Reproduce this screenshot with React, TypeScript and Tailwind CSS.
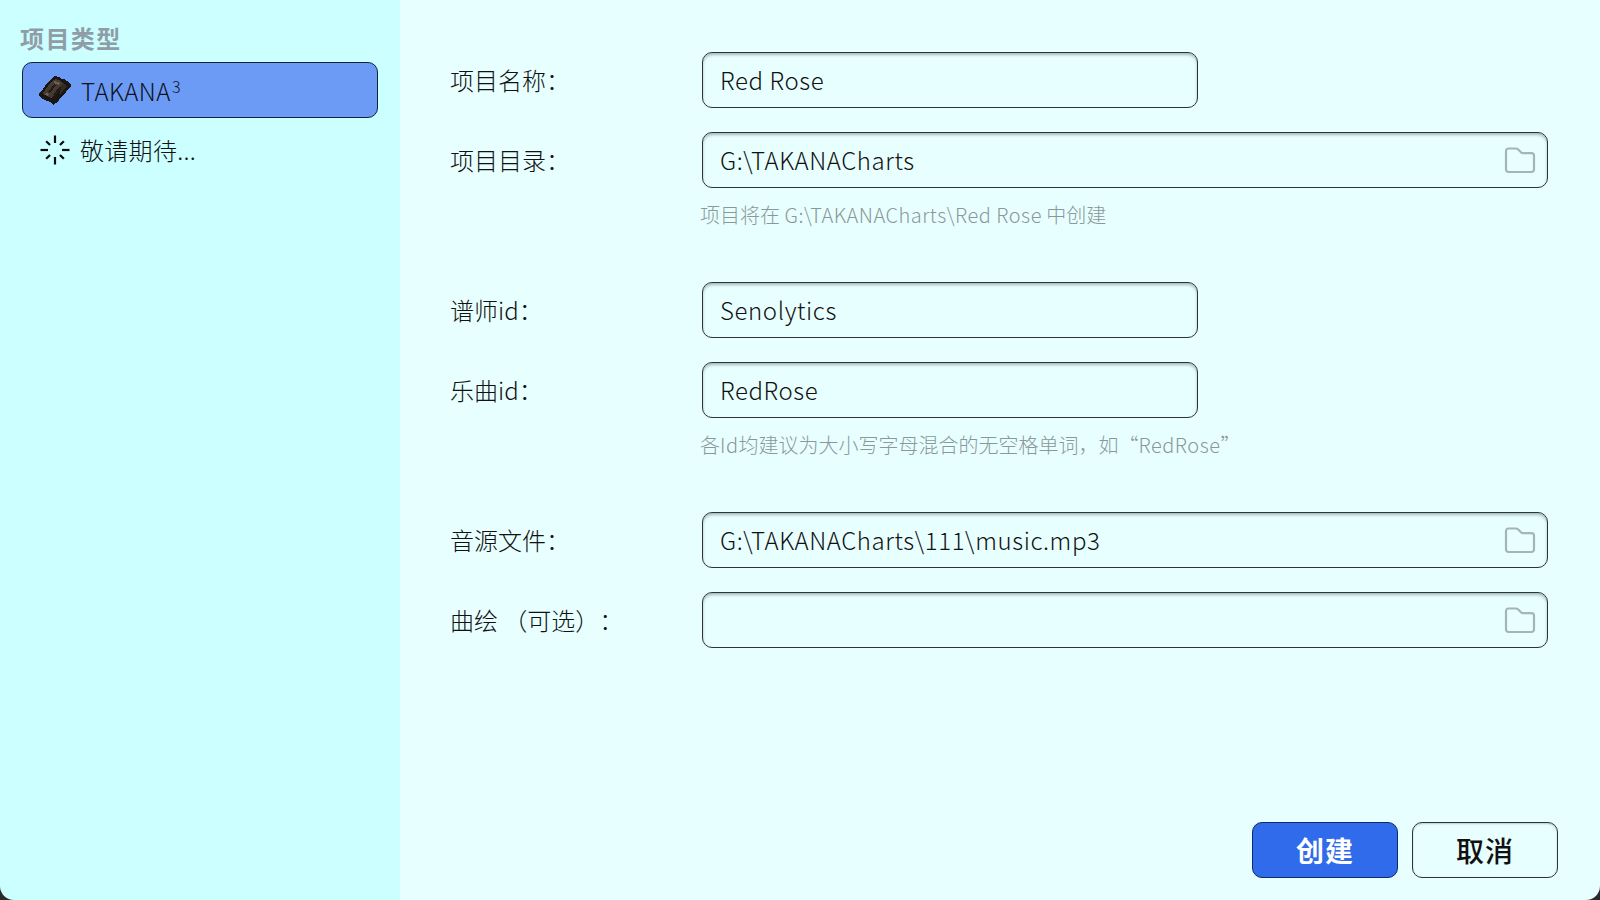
const FONT = "font-['Noto_Sans_CJK_SC','Noto_Sans',sans-serif]"

function FolderIcon() {
  return (
    <svg width="32" height="28" viewBox="0 0 32 28" fill="none" className="shrink-0">
      <path
        d="M2 5a2.5 2.5 0 0 1 2.5-2.5h7.5c1 0 1.6.4 2.2 1l3 3c.5.5 1 .7 1.8.7h8.5A2.5 2.5 0 0 1 30 9.7v13.8a2.5 2.5 0 0 1-2.5 2.5h-23A2.5 2.5 0 0 1 2 23.5z"
        stroke="#a3b5b7"
        strokeWidth="2.2"
      />
    </svg>
  )
}

function NoteIcon() {
  return (
    <svg width="32" height="30" viewBox="0 0 32 30" shapeRendering="crispEdges" className="shrink-0">
      <path d="M0 19l4-5 4-6 5-5 3-2 4 1 2 2 3 0 3 2 4 3v3l-2 1-3 4-4 4-3 4-3 3-3 2-3-3-3-1-4-2-3-2-2-2z" fill="#191613" />
      <path d="M4 18l5-7 5-6 3-1 5 2 2 3-5 6-4 5-3 3-4-2-4-2z" fill="#453a30" />
      <path d="M9 17l6-8 2 1-6 8zM14 20l6-8 2 1-6 8z" fill="#241e19" />
      <path d="M15 6l6 2-1 2-5-2zM7 18l3 1-1 2-3-1z" fill="#6f6151" />
      <path d="M24 8l4 3-7 9-1-1z" fill="#332a23" />
    </svg>
  )
}

function SpinnerIcon() {
  const spokes = [0, 45, 90, 135, 180, 225, 270, 315]
  return (
    <svg width="30" height="30" viewBox="0 0 30 30" className="shrink-0">
      {spokes.map((a) => (
        <line
          key={a}
          x1="15"
          y1={a % 90 === 0 ? 0.5 : 2.5}
          x2="15"
          y2="8"
          stroke="#0b0b0b"
          strokeWidth="2.2"
          transform={`rotate(${a} 15 15)`}
        />
      ))}
    </svg>
  )
}

function Field({ label, value, wide }: { label: string; value: string; wide?: boolean }) {
  return (
    <div className="flex items-center">
      <div className="-ml-[2px] w-[252px] shrink-0 text-[24px] font-light text-[#111] [text-spacing-trim:space-all]">
        {label}
      </div>
      <div
        className={`flex h-14 items-center justify-between rounded-[10px] border border-[#2c3436] pl-[17px] pr-[11px] shadow-[inset_0_2px_3px_rgba(60,90,90,0.4)] ${
          wide ? 'w-[846px]' : 'w-[496px]'
        }`}
      >
        <span className="-mt-px text-[24px] font-light tracking-[0.6px] text-[#111]">{value}</span>
        {wide && <FolderIcon />}
      </div>
    </div>
  )
}

function Hint({ children }: { children: React.ReactNode }) {
  return <p className="mt-[13px] ml-[248px] text-[20px] leading-[28px] font-light text-[#8a989a]">{children}</p>
}

function Latin({ children }: { children: string }) {
  return <span className="tracking-[0.5px]">{children}</span>
}

export default function App() {
  return (
    <div className={`${FONT} h-[900px] w-[1600px] overflow-hidden bg-[#2a2a2a]`}>
      <div className="flex h-full rounded-b-[14px] overflow-hidden">
        <aside className="flex w-[400px] shrink-0 flex-col bg-[#ccffff] px-[22px] pt-[20px]">
          <h2 className="-ml-[2px] text-[24px] leading-[36px] font-bold text-[#8f9ea6] tracking-[1.4px]">项目类型</h2>
          <div className="mt-[6px] flex h-14 items-center gap-[10px] rounded-[10px] border border-[#13233a] bg-[#6c9bf6] pl-[16px] text-[24px] font-light text-[#0d1320]">
            <NoteIcon />
            <span className="mt-px tracking-[0.5px]">
              TAKANA<sup className="ml-px text-[16px]">3</sup>
            </span>
          </div>
          <div className="mt-[4px] flex h-14 items-center gap-[10px] pl-[18px] text-[24px] font-light text-[#111]">
            <SpinnerIcon />
            <span className="-mt-px tracking-[0.3px]">敬请期待...</span>
          </div>
        </aside>

        <main className="relative flex flex-1 flex-col bg-[#e8ffff] pl-[52px] pt-[52px]">
          <div className="flex flex-col gap-6">
            <Field label="项目名称：" value="Red Rose" />
            <Field label="项目目录：" value="G:\TAKANACharts" wide />
          </div>
          <Hint>
            项目将在 <Latin>G:\TAKANACharts\Red Rose</Latin> 中创建
          </Hint>

          <div className="mt-[53px] flex flex-col gap-6">
            <Field label="谱师id：" value="Senolytics" />
            <Field label="乐曲id：" value="RedRose" />
          </div>
          <Hint>
            各<Latin>Id</Latin>均建议为大小写字母混合的无空格单词，如“<Latin>RedRose</Latin>”
          </Hint>

          <div className="mt-[53px] flex flex-col gap-6">
            <Field label="音源文件：" value="G:\TAKANACharts\111\music.mp3" wide />
            <Field label="曲绘 （可选）：" value="" wide />
          </div>

          <div className="mt-auto mr-[42px] mb-[22px] flex justify-end gap-[14px]">
            <button className="h-14 w-[146px] rounded-[10px] border border-[#0c2a6b] bg-[#2f6bea] text-[28px] font-bold tracking-[1px] text-white">
              创建
            </button>
            <button className="h-14 w-[146px] rounded-[10px] border border-[#2c3436] text-[28px] font-medium tracking-[1px] text-[#111] shadow-[inset_0_1px_2px_rgba(60,90,90,0.3)]">
              取消
            </button>
          </div>
        </main>
      </div>
    </div>
  )
}
